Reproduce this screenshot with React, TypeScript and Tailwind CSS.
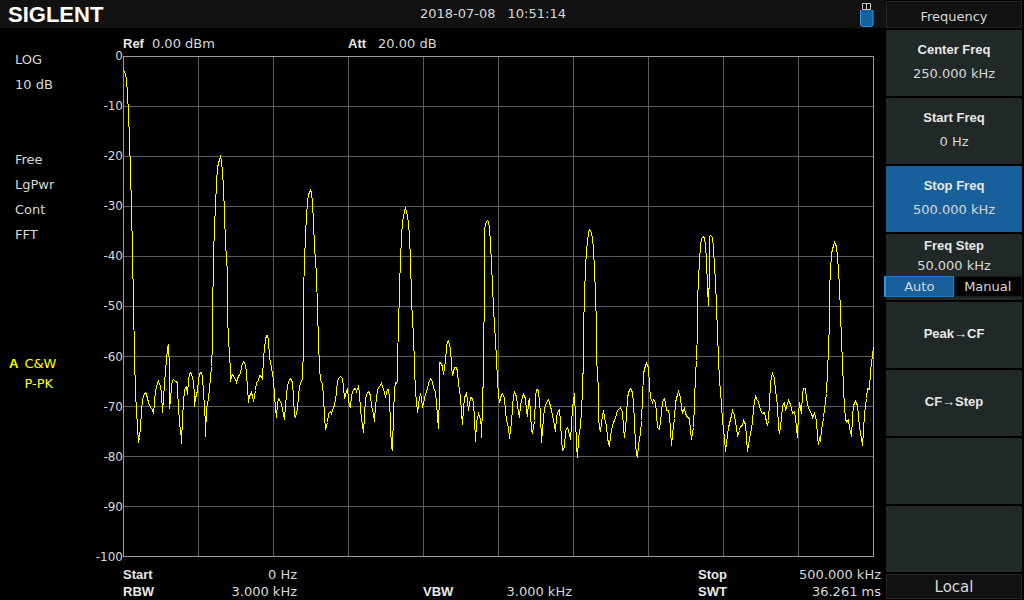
import React, { useState } from 'react';

// Trace vertices, same units as the graticule: x 123..873, y 56 (0 dBm) .. 556 (-100 dBm)
const TRACE = `
123,70 125,73 126,80 127,93 128,113 129,140 130,170 131,208 132,252 133,303 134,356 135,392 136,410 137,427 138,442 139,437
140,427 141,410 142,400 143,395 145,392 146,394 147,398 148,402 150,407 152,409 153,413 154,402 155,390 157,383 158,381 160,386
161,393 162,412 163,398 164,383 165,370 166,360 167,347 168,345 169,367 169,408 170,400 171,385 172,380 173,379 175,381 177,382
177,390 178,407 179,422 181,438 181,443 182,417 183,402 184,390 185,387 186,386 187,394 188,380 189,374 190,372 191,373 193,382
194,395 194,406 195,398 197,390 198,380 199,373 201,372 202,377 203,392 204,407 205,423 205,436 206,408 208,398 209,387 210,378
211,366 212,343 212,318 213,257 214,225 215,206 216,182 217,167 219,159 220,156 221,161 222,172 223,187 224,213 225,243 227,273
227,315 228,340 229,353 230,372 230,381 231,376 232,374 234,377 236,382 237,378 239,374 240,373 241,366 243,361 245,364 246,373
247,387 248,402 249,396 251,392 252,396 253,401 255,390 256,382 258,380 259,375 261,376 262,378 263,357 265,339 266,335 267,335
268,340 269,357 271,367 273,380 274,395 275,408 276,417 277,403 278,398 280,401 282,408 283,414 284,419 285,405 286,395 287,385
289,379 290,378 292,382 293,397 294,416 295,417 297,408 298,395 299,386 301,380 302,379 303,345 303,292 304,261 305,235 306,215
307,202 308,194 310,190 311,192 312,202 313,222 314,246 316,275 317,308 318,342 319,367 320,380 322,383 323,397 324,415 325,429
327,422 328,413 330,411 331,413 333,407 334,405 336,392 337,380 339,377 340,376 342,378 343,387 344,398 346,391 347,389 348,398
349,406 350,407 351,395 353,389 355,388 356,391 358,386 359,393 360,410 362,425 363,432 364,415 365,398 367,392 368,391 370,395
371,405 373,413 374,421 375,405 377,390 378,387 380,385 381,383 383,389 385,396 387,389 388,389 389,398 390,425 391,447 392,450
393,413 394,390 395,382 396,383 397,380 397,355 398,330 399,287 400,259 401,237 402,221 404,211 405,207 406,211 408,222 409,237
410,259 411,297 412,322 413,333 414,367 415,392 416,400 417,412 419,397 420,394 421,397 422,407 424,398 425,393 426,392 428,383
430,378 432,381 433,387 435,392 436,402 437,417 438,428 439,392 439,362 441,363 442,367 443,374 445,360 446,347 447,341 448,340
450,348 451,365 452,375 454,367 456,367 457,371 458,383 460,397 461,412 462,424 463,408 464,397 466,393 467,400 468,410 470,397
472,398 473,403 474,418 475,441 476,422 478,413 480,419 481,428 481,437 482,405 483,370 483,330 484,313 484,230 485,223 487,220
488,221 489,228 490,243 491,263 492,285 493,307 494,325 495,340 496,358 497,380 498,395 499,402 501,394 502,393 504,398 505,410
506,420 508,427 509,438 511,422 512,407 513,395 514,392 516,396 517,405 519,417 520,405 522,396 523,394 525,398 526,410 527,416
528,402 529,398 530,413 531,430 532,433 534,420 535,397 536,389 538,390 539,402 540,413 541,442 543,418 544,408 546,402 548,399
549,402 551,410 553,420 555,431 556,417 557,412 559,409 560,422 561,438 562,450 564,447 565,430 567,427 568,430 570,439 571,425
572,407 574,393 575,418 576,445 577,457 578,438 580,425 581,410 582,390 583,357 583,330 584,294 585,268 586,250 588,232 589,229
590,230 592,237 593,250 594,268 595,295 596,325 596,357 598,390 598,418 599,427 600,431 602,415 603,410 604,417 606,425 607,438
609,446 610,435 612,425 615,417 617,410 620,407 622,412 623,427 624,437 626,417 627,397 629,389 630,388 632,392 633,402 634,423
635,443 636,454 637,457 638,445 640,433 641,420 642,398 643,373 645,365 646,363 648,367 649,385 650,397 652,402 653,399 655,402
656,413 657,427 659,429 661,413 662,401 664,398 665,403 666,410 668,410 669,415 670,430 671,445 673,425 674,418 675,402 677,394
678,391 680,397 681,408 682,412 684,408 685,413 687,417 689,418 690,430 691,439 693,427 694,403 695,373 696,360 697,329 697,300
698,280 699,259 700,246 701,238 703,236 704,238 705,245 706,260 707,287 708,305 709,272 709,236 710,235 712,237 713,248 714,267
715,280 716,307 717,332 718,358 719,380 720,390 721,405 722,420 724,438 725,451 727,435 728,427 729,423 731,415 732,410 734,415
736,427 737,436 739,430 740,426 742,425 743,420 745,424 746,437 747,451 749,438 750,433 752,422 753,408 755,395 756,399 758,401
760,410 762,413 764,412 765,417 767,425 768,420 769,402 770,383 771,376 772,373 774,378 775,390 777,405 778,427 779,433 781,418
782,405 784,402 785,410 787,403 788,400 790,404 792,413 794,411 795,417 797,437 798,413 799,402 801,413 802,393 803,388 805,388
806,398 808,408 811,413 812,417 814,413 816,420 817,437 818,444 819,438 820,440 821,430 823,417 824,408 826,393 827,370 828,350
829,320 829,290 830,270 831,253 833,245 834,242 836,246 837,257 838,270 839,287 840,312 841,340 842,363 843,387 844,407 845,418
846,422 848,419 849,427 851,436 852,417 853,405 855,401 857,405 858,415 859,427 861,438 862,445 863,430 864,413 866,398 867,388
869,389 870,370 872,355 873,347`;

const LEVELS = [0, -10, -20, -30, -40, -50, -60, -70, -80, -90, -100];

interface ReadingProps {
  label: string;
  value: string;
  className?: string;
}

const Bold: React.FC<{ children: React.ReactNode }> = ({ children }) => (
  <span className="font-['Liberation_Sans',sans-serif] font-bold text-[#e8e8e8]">{children}</span>
);

const Reading: React.FC<ReadingProps> = ({ label, value, className }) => (
  <div className={`flex justify-between ${className ?? ''}`}>
    <Bold>{label}</Bold>
    <span>{value}</span>
  </div>
);

const UsbIcon: React.FC = () => (
  <svg width="14" height="24" viewBox="0 0 14 24" aria-label="USB">
    <path d="M2.5 0.500h8v6h-8z M6.500 0.500v6" fill="none" stroke="#c8c8c8" />
    <path d="M0.500 7v14q0 2.500 2.500 2.500h7.500q2.500 0 2.500-2.500V7z" fill="#18609b" />
    <path d="M0.500 7v14q0 2.500 2.500 2.500h7.500q2.500 0 2.500-2.500V7" fill="none" stroke="#2b97f5" />
  </svg>
);

const Graticule: React.FC = () => (
  <svg
    className="block h-full w-full"
    viewBox="122.5 55.5 751 501"
    preserveAspectRatio="none"
    shapeRendering="crispEdges"
    fill="none"
    role="img"
    aria-label="Spectrum"
  >
    {[1, 2, 3, 4, 5, 6, 7, 8, 9].map(i => (
      <path key={i} d={`M${123 + i * 75} 56v500M123 ${56 + i * 50}h750`} stroke="#5c5c5c" />
    ))}
    <path d="M123 56h750v500h-750z" stroke="#9a9a9a" />
    <polyline points={TRACE} stroke="#ffff00" />
  </svg>
);

interface MenuKeyProps {
  label?: string;
  value?: string;
  active?: boolean;
  onClick?: () => void;
}

const MenuKey: React.FC<MenuKeyProps> = ({ label, value, active, onClick }) => (
  <button
    type="button"
    onClick={onClick}
    className={`flex min-h-0 flex-1 flex-col items-center justify-center gap-1 pb-0.5 ${active ? 'bg-[#18609b]' : 'bg-[#212828]'}`}
  >
    {label && <Bold>{label}</Bold>}
    {value && <span>{value}</span>}
  </button>
);

const App: React.FC = () => {
  const [selected, setSelected] = useState('stop');
  const [auto, setAuto] = useState(true);

  return (
    <div className="flex h-screen bg-black font-['DejaVu_Sans',sans-serif] text-[13px] leading-5 text-[#d8d8d8]">
      <div className="flex min-w-0 flex-1 flex-col">
        <header className="grid h-7 shrink-0 grid-cols-3 items-center bg-[#111111] pr-3 pl-2">
          <h1 className="pt-0.5 font-['Liberation_Sans',sans-serif] text-[22px] font-bold text-white">SIGLENT</h1>
          <div className="flex justify-center gap-3 pl-26 whitespace-nowrap">
            <span>2018-07-08</span>
            <span>10:51:14</span>
          </div>
          <div className="flex justify-end pt-0.5">
            <UsbIcon />
          </div>
        </header>

        <div className="flex min-h-0 flex-1">
          <aside className="w-[90px] shrink-0 pt-[19px] pl-[15px] leading-[25px]">
            <p>LOG</p>
            <p>10 dB</p>
            <div className="mt-[50px]">
              <p>Free</p>
              <p>LgPwr</p>
              <p>Cont</p>
              <p>FFT</p>
            </div>
            <div className="mt-[107px] -ml-1.5 flex gap-1.5 leading-5 text-[#ffff00]">
              <span className="font-['Liberation_Sans',sans-serif] font-bold">A</span>
              <div>
                <p>C&amp;W</p>
                <p>P-PK</p>
              </div>
            </div>
          </aside>

          <main className="flex min-w-0 flex-1 flex-col">
            <div className="ml-[33px] flex h-7 shrink-0 items-center pt-[3px]">
              <div className="flex w-[225px] gap-2">
                <Bold>Ref</Bold>
                <span>0.00 dBm</span>
              </div>
              <div className="flex gap-3">
                <Bold>Att</Bold>
                <span>20.00 dB</span>
              </div>
            </div>

            <div className="flex min-h-0 flex-1 pr-3">
              <div className="-my-2.5 flex w-[33px] shrink-0 flex-col items-end justify-between text-xs leading-5">
                {LEVELS.map(level => (
                  <span key={level}>{level}</span>
                ))}
              </div>
              <div className="min-w-0 flex-1">
                <Graticule />
              </div>
            </div>

            <footer className="mt-[9px] mr-[5px] ml-[33px] flex shrink-0 justify-between leading-[17px]">
              <div className="w-[174px]">
                <Reading label="Start" value="0 Hz" />
                <Reading label="RBW" value="3.000 kHz" />
              </div>
              <Reading className="w-[149px] self-end" label="VBW" value="3.000 kHz" />
              <div className="w-[183px]">
                <Reading label="Stop" value="500.000 kHz" />
                <Reading label="SWT" value="36.261 ms" />
              </div>
            </footer>
          </main>
        </div>
      </div>

      <nav className="flex w-[138px] shrink-0 flex-col gap-0.5 py-px pr-0.5">
        <h2 className="flex h-[27px] shrink-0 items-center justify-center border border-[#242424] bg-[#111111] pt-1">Frequency</h2>
        <MenuKey label="Center Freq" value="250.000 kHz" active={selected === 'center'} onClick={() => setSelected('center')} />
        <MenuKey label="Start Freq" value="0 Hz" active={selected === 'start'} onClick={() => setSelected('start')} />
        <MenuKey label="Stop Freq" value="500.000 kHz" active={selected === 'stop'} onClick={() => setSelected('stop')} />
        <div className="flex min-h-0 flex-1 flex-col bg-[#212828] pt-0.5">
          <button
            type="button"
            onClick={() => setSelected('step')}
            className="flex flex-col items-center"
          >
            <Bold>Freq Step</Bold>
            <span>50.000 kHz</span>
          </button>
          <div className="-ml-0.5 flex h-[21px] shrink-0 bg-black">
            <button
              type="button"
              aria-pressed={auto}
              onClick={() => setAuto(true)}
              className={`flex-1 border ${auto ? 'border-[#1c7ac8] border-l-2 border-l-[#2b97f5] bg-[#18609b]' : 'border-[#1c1c1c]'} leading-[17px]`}
            >
              Auto
            </button>
            <button
              type="button"
              aria-pressed={!auto}
              onClick={() => setAuto(false)}
              className={`flex-1 border ${auto ? 'border-[#1c1c1c]' : 'border-[#1c7ac8] bg-[#18609b]'} leading-[17px]`}
            >
              Manual
            </button>
          </div>
        </div>
        <MenuKey label="Peak→CF" />
        <MenuKey label="CF→Step" />
        <MenuKey />
        <MenuKey />
        <button type="button" className="h-[25px] shrink-0 border border-[#242424] bg-[#111111] text-[15px]">
          Local
        </button>
      </nav>
    </div>
  );
};

export default App;
